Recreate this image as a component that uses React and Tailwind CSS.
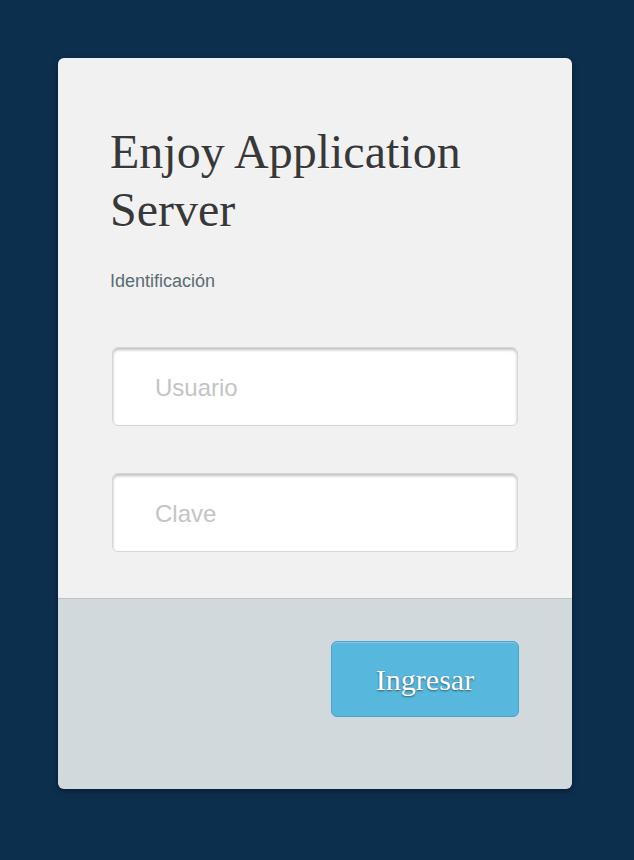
export default function App() {
  return (
    <div className="min-h-[860px] w-full bg-[#0d2f4e] pt-[58px] pl-[58px]">
      <div className="w-[514px] rounded-[6px] overflow-hidden shadow-[0_2px_6px_rgba(0,0,0,0.4)]">
        <div className="h-[541px] bg-[#f1f1f1] pt-[65px] pl-[52px] pr-[54px] border-b border-[#bcc3c6]">
          <h1 className="text-[48px] leading-[57.6px] text-[#383838] font-['Liberation_Serif',serif] [text-shadow:0_1px_0_rgba(255,255,255,0.8)]">
            Enjoy Application<br />Server
          </h1>
          <div className="mt-[33px] text-[18px] leading-[20px] text-[#5b6b72] font-['Liberation_Sans',sans-serif]">
            Identificación
          </div>
          <div className="mt-[56px] ml-[2px] flex flex-col gap-[47px]">
            <input
              placeholder="Usuario"
              className="w-[406px] h-[79px] rounded-[6px] bg-white border border-[#d6d6d6] pl-[42px] pt-[2px] text-[24px] font-['Liberation_Sans',sans-serif] placeholder:text-[#c4c4c4] outline-none shadow-[inset_0_2px_3px_rgba(0,0,0,0.25)]"
            />
            <input
              placeholder="Clave"
              type="password"
              className="w-[406px] h-[79px] rounded-[6px] bg-white border border-[#d6d6d6] pl-[42px] pt-[2px] text-[24px] font-['Liberation_Sans',sans-serif] placeholder:text-[#c4c4c4] outline-none shadow-[inset_0_2px_3px_rgba(0,0,0,0.25)]"
            />
          </div>
        </div>
        <div className="h-[190px] bg-[#d1d9dc] flex justify-end items-start pt-[42px] pr-[53px]">
          <button className="w-[188px] h-[76px] rounded-[6px] bg-[#57b7dc] border border-[#47a5cb] text-white text-[30px] font-['Liberation_Serif',serif] [text-shadow:0_1px_2px_rgba(0,0,0,0.5)] shadow-[inset_0_1px_0_rgba(255,255,255,0.25)]">
            Ingresar
          </button>
        </div>
      </div>
    </div>
  );
}
